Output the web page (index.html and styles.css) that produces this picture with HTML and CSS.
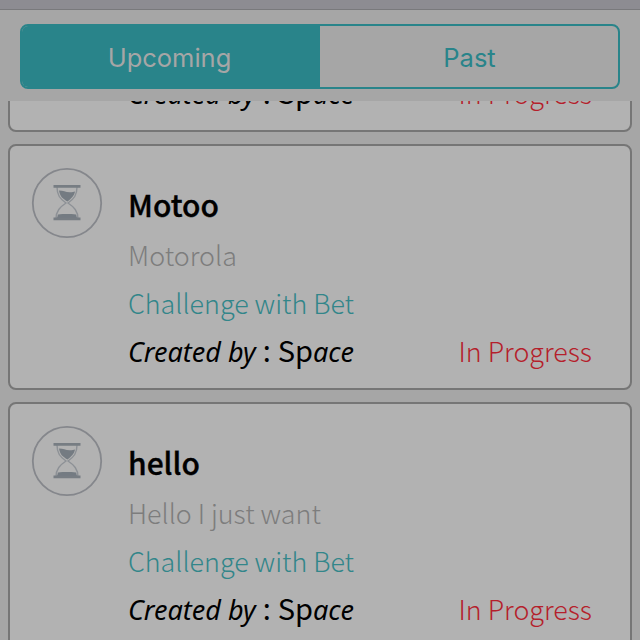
FILE: index.html
```
<!DOCTYPE html>
<html lang="en">
<head>
<meta charset="utf-8">
<title>Challenges</title>
<link rel="stylesheet" href="styles.css">
</head>
<body>
<svg class="defs" width="0" height="0" aria-hidden="true">
  <symbol id="hourglass" viewBox="0 0 72 72">
    <circle cx="36" cy="36" r="34.2" fill="none" stroke="#85878c" stroke-width="1.8"/>
    <path d="M26 20c0 8 3 12 9 16c-6 4-10 8-10 16M46 20c0 8-3 12-9 16c6 4 10 8 10 16" fill="none" stroke="#8d9196" stroke-width="1.4"/>
    <path d="M28 23.500c5 0 7 2.500 14 1.500l2-.5c-1 5-4 7-7.500 10c-5-3-7.500-5-8.500-11zM27 47.500c6-.6 12-.6 18 0l1 3.500H26z" fill="#747b82"/>
    <path d="M22.500 18h27v2.800h-27zM22.500 50.500h27v2.800h-27z" fill="#777d83"/>
  </symbol>
</svg>
<header class="topbar"></header>
<nav class="tabs"><div class="segments">
  <span class="segment active">Upcoming</span><span class="segment">Past</span>
</div></nav>
<main class="list">
  <article class="card scrolled">
    <div class="footer"><span class="creator"><i>Created by</i><b class="sep">:</b><b>Sp</b><i>ace</i></span><span class="status">In Progress</span></div>
  </article>
  <article class="card">
    <svg class="icon"><use href="#hourglass"/></svg>
    <h2>Motoo</h2>
    <p class="description">Motorola</p>
    <p class="kind">Challenge with Bet</p>
    <div class="footer"><span class="creator"><i>Created by</i><b class="sep">:</b><b>Sp</b><i>ace</i></span><span class="status">In Progress</span></div>
  </article>
  <article class="card">
    <svg class="icon"><use href="#hourglass"/></svg>
    <h2>hello</h2>
    <p class="description">Hello I just want</p>
    <p class="kind">Challenge with Bet</p>
    <div class="footer"><span class="creator"><i>Created by</i><b class="sep">:</b><b>Sp</b><i>ace</i></span><span class="status">In Progress</span></div>
  </article>
</main>
</body>
</html>
```

FILE: styles.css
```
* { box-sizing: border-box; }
body {
  margin: 0;
  width: 640px;
  height: 640px;
  overflow: hidden;
  display: flex;
  flex-direction: column;
  background: #a6a6a6;
  font-family: "Noto Sans CJK SC", "Noto Sans", sans-serif;
}
.defs { position: absolute; }
.topbar { flex: none; height: 10px; background: #8d8c92; border-bottom: 1px solid #79797c; }
.tabs { flex: none; height: 91px; padding: 14px 20px 12px; }
.segments {
  display: flex;
  height: 65px;
  border: 2px solid #29848a;
  border-radius: 8px;
  overflow: hidden;
}
.segment {
  flex: 1;
  display: flex;
  align-items: center;
  justify-content: center;
  padding: 2px 0 0 1px;
  color: #29848a;
  font: 400 25.5px/1 Inter, sans-serif;
}
.segment.active { flex: 0 0 298px; padding: 2px 3px 0 0; background: #29848a; color: #a6a6a6; }
.list {
  flex: 1;
  min-height: 0;
  overflow: hidden;
  padding: 0 8px;
  display: flex;
  flex-direction: column;
  gap: 12px;
}
.card {
  flex: none;
  height: 246px;
  border: 2px solid #767676;
  border-radius: 8px;
  background: #b2b2b2;
  display: grid;
  grid-template-columns: 96px 1fr;
  grid-template-rows: repeat(4, 48px);
  column-gap: 22px;
  padding: 37px 38px 0 0;
}
.card.scrolled { margin-top: -215px; }
.card > h2, .card > p, .footer { grid-column: 2; margin: 0; line-height: 48px; white-space: nowrap; }
.scrolled .footer { grid-row: 4; }
.icon { grid-column: 1; grid-row: 1 / 3; width: 72px; height: 72px; margin: -16px 0 0 21px; }
.card > h2 { margin-top: -3px; font-size: 30px; font-weight: 500; color: #000; -webkit-text-stroke: 0.35px #000; }
p { font-size: 26.85px; font-weight: 300; }
.description { color: #7d7d7d; }
.kind { color: #32868a; }
.footer { display: flex; justify-content: space-between; font-size: 26.85px; }
.creator { display: flex; color: #000; }
.creator i { padding-top: 1px; font-family: "Noto Sans", sans-serif; font-style: italic; font-size: 27px; }
.creator b { margin-top: -2px; font-weight: 400; font-size: 29px; }
.creator .sep { margin-left: 7px; margin-right: 7px; }
.status { color: #b51f2c; font-weight: 300; }
```
